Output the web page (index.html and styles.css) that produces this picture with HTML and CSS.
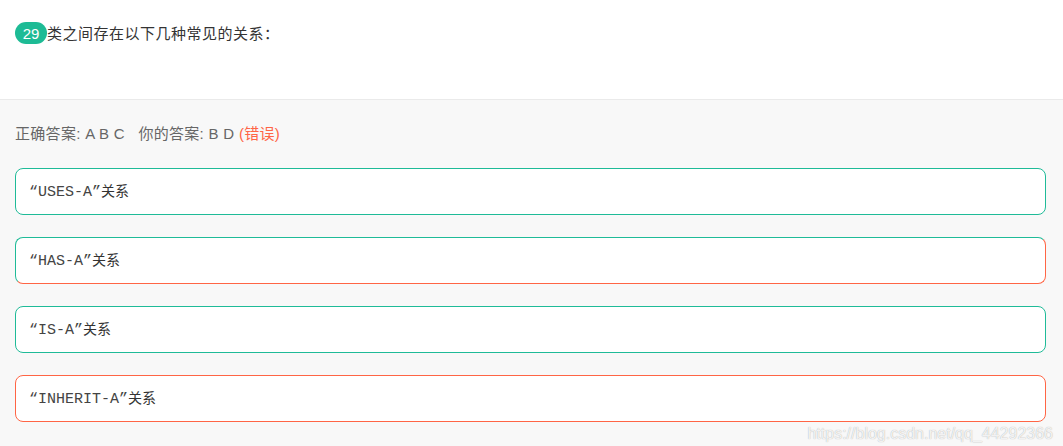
FILE: index.html
```html
<!DOCTYPE html>
<html lang="zh">
<head>
<meta charset="utf-8">
<link rel="stylesheet" href="styles.css">
</head>
<body>
<div class="question">
  <span class="badge">29</span><span class="qtext">类之间存在以下几种常见的关系：</span>
</div>
<div class="answers">
  <div class="result">正确答案: A B C&nbsp;&nbsp;&nbsp;你的答案: B D <span class="wrong">(错误)</span></div>
  <div class="option ok"><span class="label"><span class="code">“USES-A”</span>关系</span></div>
  <div class="option mixed"><span class="label"><span class="code">“HAS-A”</span>关系</span></div>
  <div class="option ok"><span class="label"><span class="code">“IS-A”</span>关系</span></div>
  <div class="option bad last"><span class="label"><span class="code">“INHERIT-A”</span>关系</span></div>
  <div class="watermark">https://blog.csdn.net/qq_44292366</div>
</div>
</body>
</html>
```
FILE: styles.css
```css
html, body {
  margin: 0;
  padding: 0;
  background: #f8f8f8;
  font-family: "Liberation Sans", Arial, "Noto Sans CJK SC", sans-serif;
  overflow: hidden;
}
.question {
  height: 100px;
  background: #fff;
  border-bottom: 1px solid #eaeaea;
  box-sizing: border-box;
  padding: 22px 15px 0 15px;
  display: flex;
  align-items: flex-start;
}
.badge {
  display: inline-flex;
  align-items: center;
  justify-content: center;
  width: 32px;
  height: 22px;
  border-radius: 11px;
  background: #1dbb95;
  color: #fff;
  font-size: 15px;
}
.qtext {
  font-size: 15px;
  letter-spacing: 0.5px;
  line-height: 22px;
  color: #333;
  font-family: "Noto Sans CJK SC", sans-serif;
}
.answers {
  position: relative;
  height: 346px;
  box-sizing: border-box;
  padding: 24px 17px 0 15px;
}
.result {
  font-size: 15px;
  letter-spacing: 0.3px;
  color: #666;
  line-height: 20px;
  margin-bottom: 24px;
  font-family: "Liberation Sans", "Noto Sans CJK SC", sans-serif;
}
.wrong {
  color: #ff6545;
}
.option {
  height: 47px;
  box-sizing: border-box;
  background: #fff;
  border: 1px solid #1fbb98;
  border-radius: 8px;
  display: flex;
  align-items: center;
  padding-left: 13px;
  margin-bottom: 22px;
  font-size: 14px;
  color: #333;
  font-family: "Noto Sans CJK SC", sans-serif;
}
.label {
  line-height: 20px;
}
.option.last {
  margin-bottom: 0;
}
.option.bad {
  border-color: #ff6545;
}
.option.mixed {
  border-color: #1fbb98 #ff6545 #ff6545 #1fbb98;
}
.code {
  font-family: "Liberation Mono", "Courier New", monospace;
  font-size: 15px;
  color: #444;
}
.watermark {
  position: absolute;
  right: 10px;
  bottom: 3px;
  font-size: 16px;
  color: rgba(255, 255, 255, 0.85);
  text-shadow: 0 0 1px rgba(0, 0, 0, 0.35);
  font-family: "Liberation Sans", Arial, sans-serif;
}
```
